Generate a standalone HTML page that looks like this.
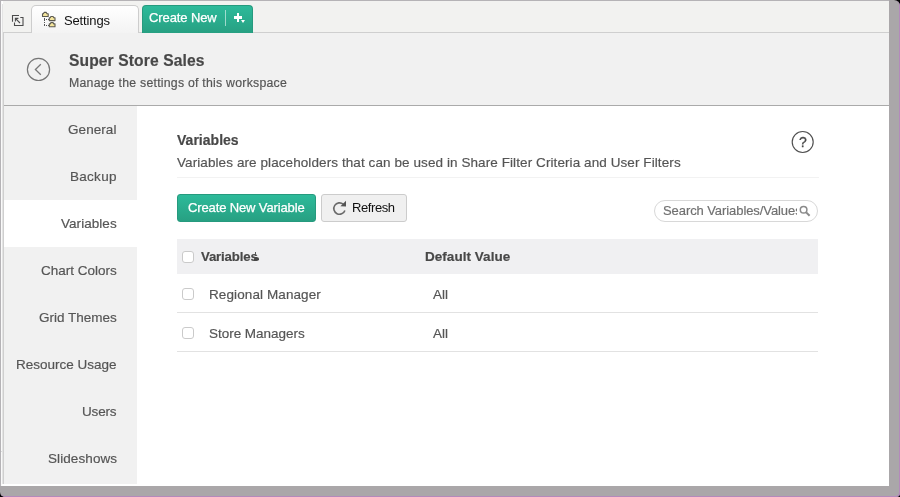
<!DOCTYPE html>
<html><head><meta charset="utf-8">
<style>
*{margin:0;padding:0;box-sizing:border-box}
html,body{width:900px;height:497px;overflow:hidden;background:#000}
body{font-family:"Liberation Sans",sans-serif;position:relative;color:#555}
.abs{position:absolute}
.t{position:absolute;white-space:nowrap;line-height:1;will-change:transform;-webkit-text-stroke:0.18px currentColor}
#frame{left:0;top:0;width:900px;height:497px;background:#aaa7a9;border-radius:0 6px 4px 5px;box-shadow:inset -1px -1px 0 #b489bb}
#win{left:0;top:0;width:889px;height:486px;background:#fff}
#tabbar{left:3px;top:1px;width:886px;height:32px;background:#f2f2f0;border-bottom:1px solid #cfcfcf}
#head{left:4px;top:33px;width:885px;height:73px;background:#f1f1f1;border-bottom:1px solid #aaa}
#side{left:4px;top:106px;width:133px;height:378px;background:#f1f1f1}
#sel{left:4px;top:200px;width:133px;height:47px;background:#fff}
.nav{right:783.3px;font-size:13.5px;color:#555}
</style></head><body>
<div class="abs" id="frame"></div>
<div class="abs" id="win"></div>
<div class="abs" style="left:0;top:0;width:889px;height:1px;background:#b5b3b6"></div>
<div class="abs" style="left:0;top:0;width:1px;height:486px;background:#b5b3b6"></div>
<div class="abs" style="left:1px;top:1px;width:1px;height:485px;background:#fafafa"></div>
<div class="abs" style="left:2px;top:4px;width:1px;height:480px;background:#e4e4e4"></div>
<div class="abs" style="left:3px;top:32px;width:1px;height:452px;background:#cfcfcf"></div>
<div class="abs" style="left:1px;top:451px;width:1px;height:1px;background:#dcdcdc"></div>
<div class="abs" id="tabbar"></div>
<div class="abs" id="head"></div>
<div class="abs" id="side"></div>
<div class="abs" id="sel"></div>

<!-- tab bar -->
<svg class="abs" style="left:11px;top:13px" width="14" height="14" viewBox="0 0 14 14" fill="none" stroke="#4c4c4c" stroke-width="1.1">
<path d="M1.5 8.8V2.5H8"/><path d="M9.3 4.5H12V12.5H3.5V9.6"/><path d="M4.6 5.6L9 10"/><path d="M4.4 8.4V5.4H7.4"/>
</svg>
<div class="abs" id="tab" style="left:31px;top:5px;width:108px;height:28px;border:1px solid #cdcdcd;border-bottom:none;border-radius:5px 5px 0 0;background:linear-gradient(#fff,#f3f3f3)"></div>
<svg class="abs" style="left:41px;top:11px" width="16" height="18" viewBox="0 0 16 18">
<g fill="#f4e59c" stroke="#5c5a50" stroke-width="1.1" stroke-linejoin="round"><path d="M1.5 5.5V2.7h.9l.7-1.3h2.2l.7 1.3h1.2v2.8z"/><path d="M8.3 9.6V6.8h.9l.7-1.3h2.2l.7 1.3h1.2v2.8z"/><path d="M8.3 15.7V12.9h.9l.7-1.3h2.2l.7 1.3h1.2v2.8z"/></g>
<path d="M3.5 7V15M3 8.5H8M3 14.5H8" fill="none" stroke="#555" stroke-width="1" stroke-dasharray="1 1" shape-rendering="crispEdges"/>
</svg>
<div class="t" id="tx_settings" style="left:64px;top:14px;font-size:13px;color:#111;letter-spacing:-0.14px;-webkit-text-stroke:0">Settings</div>

<div class="abs" id="cnew" style="left:142px;top:5px;width:111px;height:28px;border-radius:4px 4px 0 0;background:linear-gradient(#2dba9a,#27a082);border:1px solid #269a7e;border-bottom:none"></div>
<div class="t" id="tx_cnew" style="left:149.4px;top:11px;font-size:13px;color:#fff;-webkit-text-stroke:0.25px #fff;letter-spacing:-0.10px">Create New</div>
<div class="abs" style="left:225px;top:10px;width:1px;height:16px;background:rgba(255,255,255,.55)"></div>
<div class="abs" style="left:234px;top:16.4px;width:8.4px;height:2.2px;background:#fff"></div>
<div class="abs" style="left:237.1px;top:13.3px;width:2.2px;height:8.4px;background:#fff"></div>
<div class="abs" style="left:241.2px;top:20.2px;width:0;height:0;border-left:2.8px solid transparent;border-right:2.8px solid transparent;border-top:3.2px solid #fff"></div>

<!-- header -->
<svg class="abs" style="left:26px;top:57px" width="25" height="25" viewBox="0 0 25 25" fill="none" stroke="#777" stroke-width="1.2">
<circle cx="12.5" cy="12.4" r="11.1"/><path d="M14.8 7.2L9.4 12.5L14.8 17.8" stroke-width="1.3"/>
</svg>
<div class="t" id="tx_title" style="left:69.3px;top:52.9px;font-size:15.6px;font-weight:bold;color:#484848;letter-spacing:0.12px">Super Store Sales</div>
<div class="t" id="tx_sub" style="left:69.3px;top:77.1px;font-size:12.3px;color:#555;letter-spacing:0.24px">Manage the settings of this workspace</div>

<!-- sidebar -->
<div class="t nav" id="n1" style="top:122.7px;letter-spacing:0.07px">General</div>
<div class="t nav" id="n2" style="top:169.7px;letter-spacing:0.28px">Backup</div>
<div class="t nav" id="n3" style="top:216.7px;letter-spacing:0.05px">Variables</div>
<div class="t nav" id="n4" style="top:263.7px;letter-spacing:-0.00px">Chart Colors</div>
<div class="t nav" id="n5" style="top:310.7px;letter-spacing:-0.01px">Grid Themes</div>
<div class="t nav" id="n6" style="top:357.7px;letter-spacing:-0.01px">Resource Usage</div>
<div class="t nav" id="n7" style="top:404.7px;letter-spacing:-0.16px">Users</div>
<div class="t nav" id="n8" style="top:451.7px;letter-spacing:0.09px">Slideshows</div>

<!-- main -->
<div class="t" id="tx_h" style="left:177.2px;top:133px;font-size:14px;font-weight:bold;color:#484848;letter-spacing:0.02px">Variables</div>
<div class="t" id="tx_desc" style="left:177.4px;top:156px;font-size:13.5px;color:#555;letter-spacing:0.085px">Variables are placeholders that can be used in Share Filter Criteria and User Filters</div>
<div class="abs" style="left:177px;top:177px;width:642px;height:1px;background:#f2f2f2"></div>
<svg class="abs" style="left:790px;top:130px" width="25" height="25" viewBox="0 0 25 25"><circle cx="12.7" cy="12" r="10.5" fill="#fff" stroke="#505050" stroke-width="1.15"/></svg>
<div class="t" id="tx_q" style="left:798.7px;top:134.9px;font-size:14px;color:#484848;-webkit-text-stroke:0.3px #484848">?</div>

<div class="abs" style="left:177px;top:194px;width:139px;height:28px;border-radius:3px;background:linear-gradient(#2dba9a,#27a082);border:1px solid #269a7e"></div>
<div class="t" id="tx_cnv" style="left:188px;top:201px;font-size:13px;color:#fff;-webkit-text-stroke:0.25px #fff;letter-spacing:-0.13px">Create New Variable</div>
<div class="abs" style="left:321px;top:194px;width:86px;height:28px;border-radius:3px;background:#f0f0f0;border:1px solid #ccc"></div>
<svg class="abs" style="left:331px;top:200px" width="17" height="17" viewBox="0 0 17 17" fill="none" stroke="#6a6a6a" stroke-width="1.6">
<path d="M12.2 4.2A5.7 5.7 0 1 0 13.9 10.4"/><path d="M15 0.8V6.6L9.4 6.2z" fill="#555" stroke="none"/>
</svg>
<div class="t" id="tx_ref" style="left:352px;top:201px;font-size:13px;color:#111;letter-spacing:-0.41px;-webkit-text-stroke:0">Refresh</div>

<div class="abs" style="left:654px;top:200px;width:164px;height:22px;border-radius:11px;border:1px solid #d8d8d8;background:#fff"></div>
<div class="t" id="tx_search" style="left:663.4px;top:204.3px;font-size:13px;color:#707070;width:134px;overflow:hidden;letter-spacing:-0.08px">Search Variables/Values</div>
<svg class="abs" style="left:799px;top:205px" width="12" height="12" viewBox="0 0 12 12" fill="none" stroke="#8a8a8a"><circle cx="4.6" cy="4.8" r="3.3" stroke-width="1.5"/><path d="M7.2 7.4L10.6 10.8" stroke-width="2"/></svg>

<div class="abs" style="left:177px;top:239px;width:641px;height:35px;background:#f0f0f2"></div>
<div class="abs cb" style="left:182px;top:251px;width:12px;height:12px;border:1px solid #cacaca;border-radius:3px;background:#fff"></div>
<div class="t" id="tx_th1" style="left:201px;top:250px;font-size:13.2px;font-weight:bold;color:#484848;letter-spacing:-0.15px">Variables</div>
<div class="abs" style="left:253.6px;top:257.2px;width:5.5px;height:3.6px;border-radius:50%;background:#454545"></div><div class="abs" style="left:254.8px;top:251.8px;width:1.3px;height:4px;background:#555"></div>
<div class="t" id="tx_th2" style="left:425px;top:250px;font-size:13.5px;font-weight:bold;color:#484848;letter-spacing:0.04px">Default Value</div>

<div class="abs cb" style="left:182px;top:288px;width:12px;height:12px;border:1px solid #cacaca;border-radius:3px;background:#fff"></div>
<div class="t" id="tx_r1" style="left:208.7px;top:287.7px;font-size:13.5px;color:#555;letter-spacing:0.1px">Regional Manager</div>
<div class="t" id="tx_a1" style="left:433px;top:287.7px;font-size:13.5px;color:#555;letter-spacing:0.00px">All</div>
<div class="abs" style="left:177px;top:312px;width:641px;height:1px;background:#e2e2e2"></div>
<div class="abs cb" style="left:182px;top:327px;width:12px;height:12px;border:1px solid #cacaca;border-radius:3px;background:#fff"></div>
<div class="t" id="tx_r2" style="left:209px;top:326.9px;font-size:13.5px;color:#555;letter-spacing:-0.03px">Store Managers</div>
<div class="t" id="tx_a2" style="left:433px;top:326.9px;font-size:13.5px;color:#555;letter-spacing:0.00px">All</div>
<div class="abs" style="left:177px;top:351px;width:641px;height:1px;background:#e2e2e2"></div>
</body></html>
